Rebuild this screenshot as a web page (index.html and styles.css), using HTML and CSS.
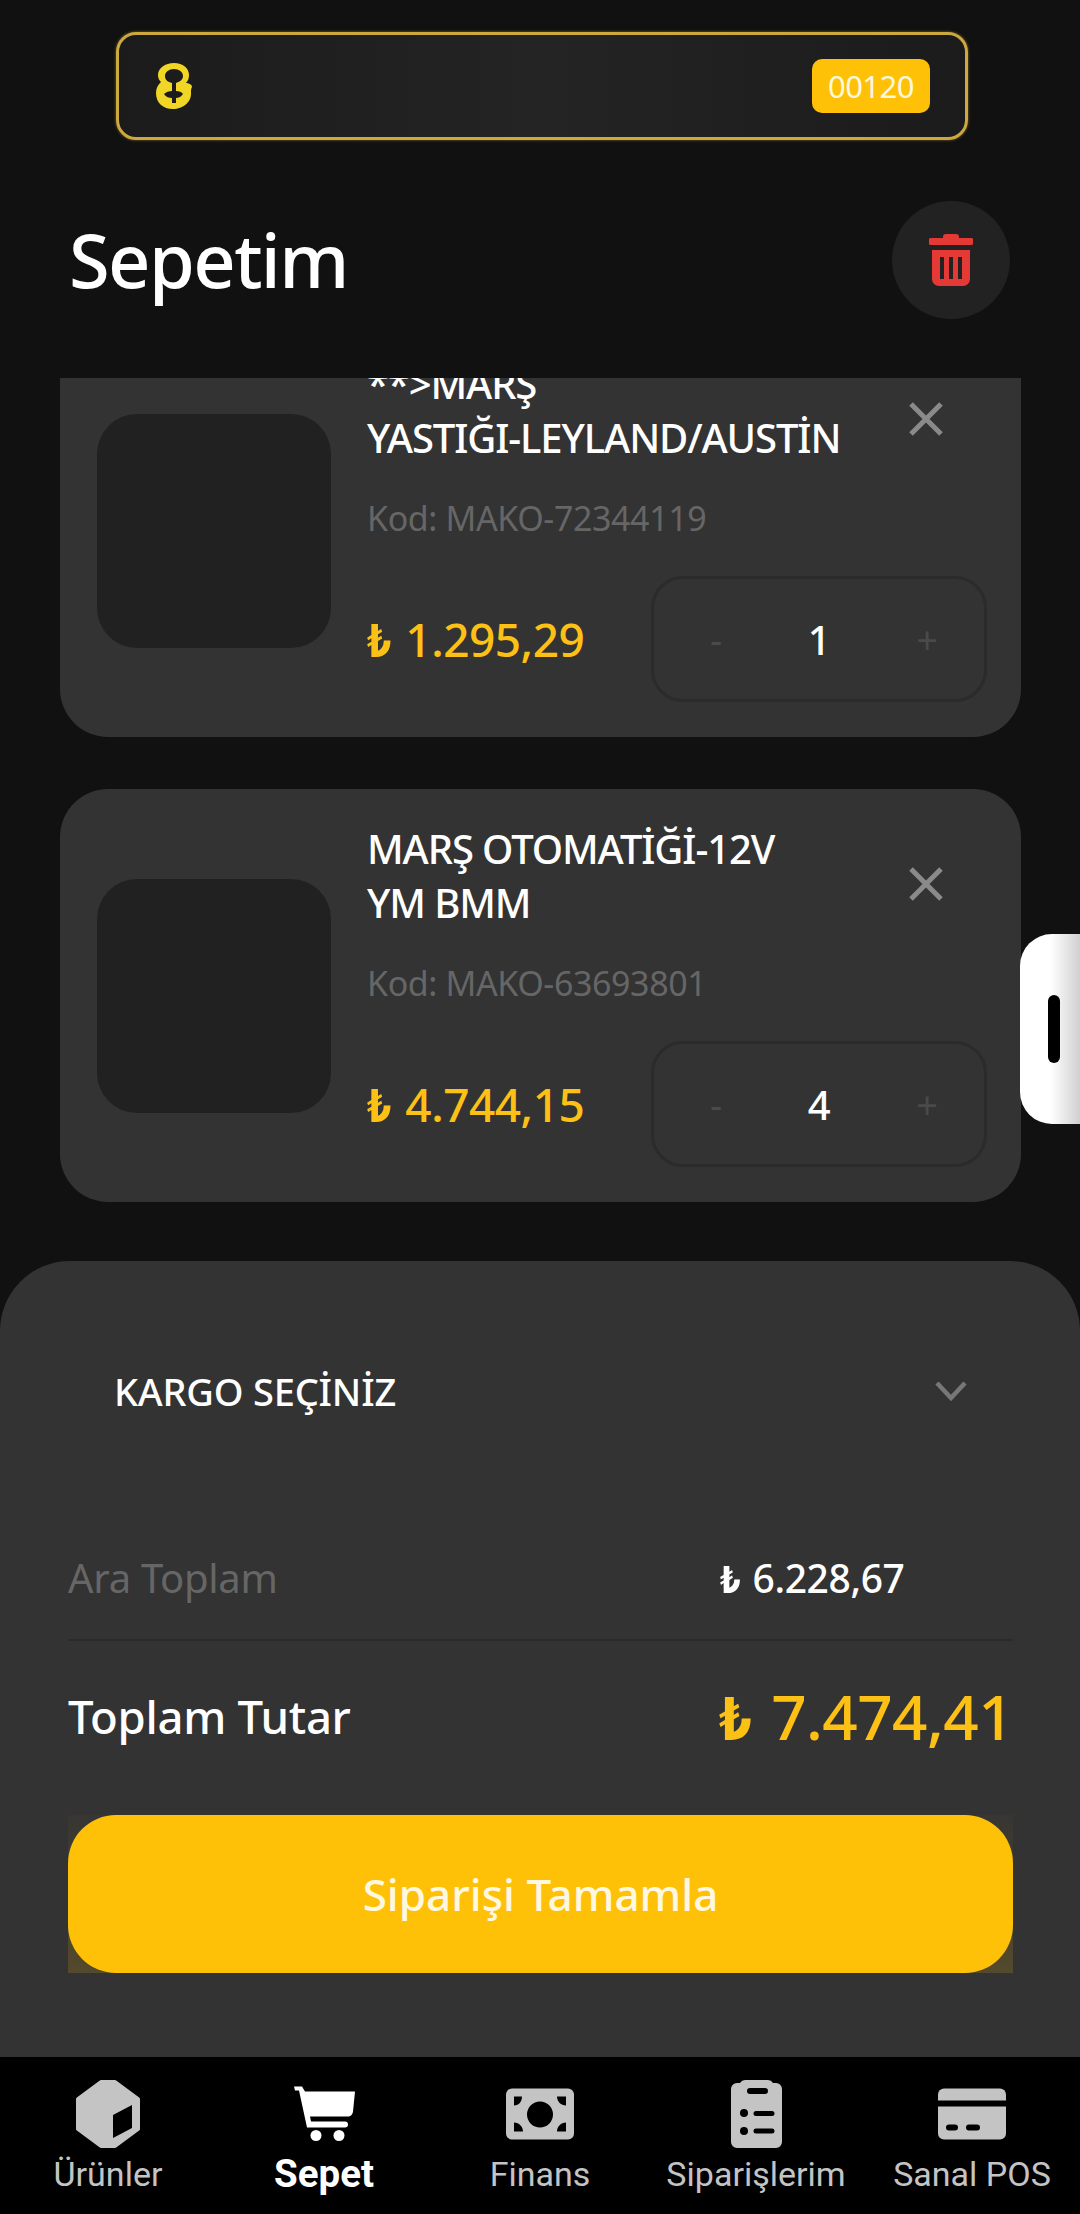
FILE: index.html
```html
<!DOCTYPE html>
<html lang="tr">
<head>
    <meta charset="UTF-8">
    <meta name="viewport" content="width=device-width, initial-scale=1.0">
    <title>Sepetim</title>
    <link rel="stylesheet" href="styles.css">
</head>
<body>
<div class="app">
    <div class="top-area">
        <div class="ticker">
            <svg class="ticker-icon" viewBox="0 0 38 48">
                <path d="M19 1c9 0 15 5 15 12 0 3-1 6-3 8 2 0 6 1 6 4-1 2-1 3-1 5 1 10-8 17-18 17S1 41 1 31c0-5 2-8 5-11C4 18 3 16 3 13 3 6 10 1 19 1z" fill="#f2d626"/>
                <path d="M19 7c5 0 9 3 9 7s-4 6-7 7v8c3 0 6 1 7 3-2 3-5 4-7 4v5h-4v-5c-3 0-6-1-8-4 2-2 5-3 8-3v-8c-4-1-7-3-7-7s4-7 9-7z" fill="#1c1c1c"/>
            </svg>
            <span class="ticker-badge">00120</span>
        </div>
        <div class="page-head">
            <h1>Sepetim</h1>
            <button class="trash-btn">
                <svg viewBox="0 0 44 52" width="44" height="52">
                    <path d="M17 0h10a3 3 0 0 1 3 3v1h12a3.500 3.500 0 0 1 0 7H2a3.500 3.500 0 0 1 0-7h12V3a3 3 0 0 1 3-3z" fill="#e53935"/>
                    <path fill-rule="evenodd" d="M3 16h38v29a7 7 0 0 1-7 7H10a7 7 0 0 1-7-7zM11 23v22h4V23zM20 23v22h4V23zM29 23v22h4V23z" fill="#e53935"/>
                </svg>
            </button>
        </div>
    </div>

    <div class="cart-list">
        <div class="cart-item cart-item-first">
            <div class="item-thumb"></div>
            <div class="item-body">
                <div class="item-top">
                    <div class="item-name">**&gt;MARŞ<br>YASTIĞI-LEYLAND/AUSTİN</div>
                    <svg class="item-remove" viewBox="0 0 36 36"><path d="M3 3l30 30M33 3L3 33"/></svg>
                </div>
                <div class="item-code">Kod: MAKO-72344119</div>
                <div class="item-bottom">
                    <div class="item-price"><span class="tl">₺</span> 1.295,29</div>
                    <div class="stepper"><span class="step">-</span><span class="qty">1</span><span class="step">+</span></div>
                </div>
            </div>
        </div>
        <div class="cart-item">
            <div class="item-thumb"></div>
            <div class="item-body">
                <div class="item-top">
                    <div class="item-name">MARŞ OTOMATİĞİ-12V<br>YM BMM</div>
                    <svg class="item-remove" viewBox="0 0 36 36"><path d="M3 3l30 30M33 3L3 33"/></svg>
                </div>
                <div class="item-code">Kod: MAKO-63693801</div>
                <div class="item-bottom">
                    <div class="item-price"><span class="tl">₺</span> 4.744,15</div>
                    <div class="stepper"><span class="step">-</span><span class="qty">4</span><span class="step">+</span></div>
                </div>
            </div>
        </div>
    </div>

    <div class="side-handle"><span></span></div>

    <div class="summary">
        <div class="cargo-select">
            <span>KARGO SEÇİNİZ</span>
            <svg viewBox="0 0 34 22" width="34" height="22"><path d="M3 3l14 15L31 3" fill="none" stroke="#777" stroke-width="4.500"/></svg>
        </div>
        <div class="sum-row sum-sub">
            <span class="sum-label">Ara Toplam</span>
            <span class="sum-value"><span class="tl">₺</span> 6.228,67</span>
        </div>
        <div class="sum-row sum-total">
            <span class="sum-label">Toplam Tutar</span>
            <span class="sum-value"><span class="tl">₺</span> 7.474,41</span>
        </div>
        <div class="complete-wrap">
            <button class="complete-btn">Siparişi Tamamla</button>
        </div>
    </div>

    <nav class="tabbar">
        <a class="tab">
            <svg viewBox="0 0 64 68" width="64" height="68">
                <path d="M25 2h14l23 17v30L39 66H25L2 49V19z" fill="#c4c4c4" stroke="#c4c4c4" stroke-width="4" stroke-linejoin="round"/>
                <path d="M37 35l19-10v23L37 58z" fill="#000"/>
            </svg>
            <span>Ürünler</span>
        </a>
        <a class="tab tab-active">
            <svg viewBox="0 0 61 55" width="61" height="55">
                <path d="M0 0h8l3 5h50l-2 20q-.5 4-4 5H16l1 5h34a3 3 0 0 1 0 6H13L5 4H1z" fill="#fff"/>
                <circle cx="22" cy="49" r="5.500" fill="#fff"/>
                <circle cx="45" cy="49" r="5.500" fill="#fff"/>
            </svg>
            <span>Sepet</span>
        </a>
        <a class="tab">
            <svg viewBox="0 0 68 51" width="68" height="51">
                <path fill-rule="evenodd" d="M6 0h56a6 6 0 0 1 6 6v39a6 6 0 0 1-6 6H6a6 6 0 0 1-6-6V6a6 6 0 0 1 6-6zM34 13a13 13 0 1 0 0 26 13 13 0 0 0 0-26zM8 8v9c5 0 8-4 8-9zM60 8h-9c0 5 4 9 9 9zM8 43h9c0-5-4-9-9-9zM60 43v-9c-5 0-9 4-9 9z" fill="#c4c4c4"/>
            </svg>
            <span>Finans</span>
        </a>
        <a class="tab">
            <svg viewBox="0 0 51 68" width="51" height="68">
                <path fill-rule="evenodd" d="M14 0h23a6 6 0 0 1 5 3h3a6 6 0 0 1 6 6v53a6 6 0 0 1-6 6H6a6 6 0 0 1-6-6V9a6 6 0 0 1 6-6h3a6 6 0 0 1 5-3zM19 8a3 3 0 0 0 0 6h15a3 3 0 0 0 0-6zM13 29a4 4 0 1 0 0 8 4 4 0 0 0 0-8zM25 31a2.500 2.500 0 0 0 0 5h16a2.500 2.500 0 0 0 0-5zM13 47a4 4 0 1 0 0 8 4 4 0 0 0 0-8zM25 48.500a2.500 2.500 0 0 0 0 5h16a2.500 2.500 0 0 0 0-5z" fill="#c4c4c4"/>
            </svg>
            <span>Siparişlerim</span>
        </a>
        <a class="tab">
            <svg viewBox="0 0 68 51" width="68" height="51">
                <path d="M6 0h56a6 6 0 0 1 6 6v6H0V6a6 6 0 0 1 6-6z" fill="#c4c4c4"/>
                <path fill-rule="evenodd" d="M0 18h68v27a6 6 0 0 1-6 6H6a6 6 0 0 1-6-6zM11 36a3 3 0 0 0 0 6h6a3 3 0 0 0 0-6zM31 36a3 3 0 0 0 0 6h8a3 3 0 0 0 0-6z" fill="#c4c4c4"/>
            </svg>
            <span>Sanal POS</span>
        </a>
    </nav>
</div>
</body>
</html>
```

FILE: styles.css
```css
* {
    box-sizing: border-box;
}
html, body {
    margin: 0;
    padding: 0;
}
body {
    font-family: "Noto Sans", "Open Sans", "DejaVu Sans", sans-serif;
    background-color: #111;
    color: #fff;
}
.app {
    position: relative;
    width: 1080px;
    height: 2214px;
    display: flex;
    flex-direction: column;
    overflow: hidden;
    background-color: #111;
}

/* Ust bolum */
.top-area {
    height: 378px;
    padding-top: 32px;
    flex: none;
}
.ticker {
    width: 852px;
    height: 108px;
    margin-left: 116px;
    padding: 0 35px 0 36px;
    display: flex;
    align-items: center;
    justify-content: space-between;
    border: 3px solid #cda83f;
    border-radius: 20px;
    background: linear-gradient(to right, #1b1b1b, #242424 50%, #1b1b1b);
    box-shadow: 0 0 3px rgba(205, 168, 63, 0.6);
}
.ticker-icon {
    width: 38px;
    height: 48px;
    filter: blur(0.7px);
}
.ticker-badge {
    width: 118px;
    height: 54px;
    display: flex;
    align-items: center;
    justify-content: center;
    background-color: #fec107;
    border-radius: 10px;
    font-size: 31px;
    letter-spacing: -0.5px;
    color: #fff8dc;
}
.page-head {
    display: flex;
    align-items: center;
    justify-content: space-between;
    padding: 60px 70px 0 69px;
    height: 179px;
}
.page-head h1 {
    margin: 0;
    font-size: 74px;
    font-weight: 500;
    letter-spacing: -1.6px;
}
.trash-btn {
    width: 118px;
    height: 118px;
    padding: 0;
    display: flex;
    align-items: center;
    justify-content: center;
    border: 0;
    border-radius: 50%;
    background-color: #222;
}

/* Sepet listesi */
.cart-list {
    height: 883px;
    flex: none;
    padding: 0 59px 0 60px;
    overflow: hidden;
}
.cart-item {
    height: 413px;
    margin-bottom: 52px;
    padding: 90px 35px 0 37px;
    display: flex;
    gap: 36px;
    border-radius: 48px;
    background-color: #333;
}
.cart-item-first {
    margin-top: -54px;
}
.item-thumb {
    width: 234px;
    height: 234px;
    flex: none;
    border-radius: 40px;
    background-color: #212121;
}
.item-body {
    flex: 1;
    margin-top: -57px;
}
.item-top {
    display: flex;
    justify-content: space-between;
    height: 108px;
}
.item-name {
    font-size: 40px;
    line-height: 54px;
    font-weight: 500;
    letter-spacing: -1.1px;
    white-space: nowrap;
}
.item-remove {
    width: 36px;
    height: 36px;
    margin: 44px 42px 0 0;
    fill: none;
    stroke: #8a8a8a;
    stroke-width: 5;
}
.item-code {
    margin-top: 30px;
    font-size: 34px;
    line-height: 46px;
    letter-spacing: -0.4px;
    color: #666;
}
.item-bottom {
    margin-top: 35px;
    display: flex;
    align-items: center;
    justify-content: space-between;
}
.item-price {
    font-size: 46px;
    font-weight: 500;
    letter-spacing: -0.5px;
    color: #fdc116;
}
.tl {
    display: inline-block;
    font-family: "DejaVu Sans", sans-serif;
    font-weight: 700;
    font-size: 0.95em;
    transform: scaleX(0.8);
    transform-origin: left center;
    margin-right: -0.07em;
}
.stepper {
    width: 336px;
    height: 126px;
    margin-right: -1px;
    padding: 0 46px 0 56px;
    display: flex;
    align-items: center;
    justify-content: space-between;
    border: 3px solid #2b2b2b;
    border-radius: 32px;
}
.step {
    font-size: 38px;
    color: #4a4a4a;
}
.qty {
    font-size: 40px;
    font-weight: 500;
}

/* Kenar tutamaci */
.side-handle {
    position: absolute;
    right: 0;
    top: 934px;
    width: 60px;
    height: 190px;
    display: flex;
    align-items: center;
    padding-left: 28px;
    border-radius: 32px 0 0 32px;
    background: linear-gradient(to right, #fff 50%, #d0d0d0);
}
.side-handle span {
    width: 12px;
    height: 68px;
    border-radius: 6px;
    background-color: #000;
}

/* Alt ozet */
.summary {
    height: 796px;
    flex: none;
    padding: 0 67px 0 68px;
    border-radius: 70px 70px 0 0;
    background-color: #333;
}
.cargo-select {
    height: 262px;
    padding: 0 45px 2px 46px;
    display: flex;
    align-items: center;
    justify-content: space-between;
    font-size: 38px;
    font-weight: 500;
    letter-spacing: -0.2px;
}
.sum-row {
    display: flex;
    align-items: center;
    white-space: nowrap;
}
.sum-label {
    width: 652px;
}
.sum-sub {
    height: 118px;
    padding-bottom: 8px;
    font-size: 39px;
    border-bottom: 2px solid #2a2a2a;
}
.sum-sub .sum-label {
    color: #666;
    font-size: 40px;
    letter-spacing: -0.3px;
}
.sum-sub .sum-value {
    font-weight: 500;
    letter-spacing: -0.4px;
}
.sum-total {
    height: 174px;
    padding-bottom: 24px;
    font-size: 45.500px;
    font-weight: 500;
}
.sum-total .sum-label {
    letter-spacing: -0.3px;
}
.sum-total .sum-value {
    font-size: 62px;
    letter-spacing: -0.6px;
    color: #fdc116;
}
.complete-wrap {
    background: linear-gradient(to bottom, rgba(254, 193, 7, 0.02), rgba(254, 193, 7, 0.16));
}
.complete-btn {
    display: block;
    width: 100%;
    height: 158px;
    border: 0;
    border-radius: 48px;
    background-color: #fec107;
    color: #fff8e1;
    font-family: inherit;
    font-size: 44px;
    font-weight: 500;
}

/* Alt menu */
.tabbar {
    height: 157px;
    flex: none;
    display: flex;
    background-color: #000;
}
.tab {
    flex: 1;
    padding: 23px 0 20px;
    display: flex;
    flex-direction: column;
    align-items: center;
    justify-content: space-between;
    font-family: Roboto, sans-serif;
    font-size: 34px;
    line-height: 40px;
    color: #c4c4c4;
}
.tab svg {
    height: 68px;
}
.tab-active {
    color: #fff;
    font-weight: 700;
    font-size: 38.500px;
}
```
